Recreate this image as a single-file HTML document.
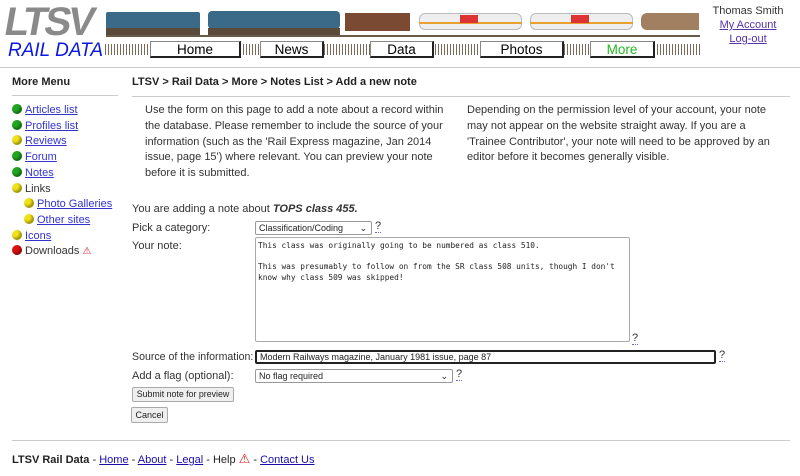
<!DOCTYPE html>
<html><head><meta charset="utf-8"><style>
*{margin:0;padding:0;box-sizing:border-box}
body{width:800px;height:476px;background:#fff;font-family:"Liberation Sans",Arial,sans-serif;font-size:11px;color:#333;position:relative;overflow:hidden}
.a{position:absolute;white-space:nowrap}
a{color:#1a0dab;text-decoration:underline}
.side a{color:#3333cc}
.dot{display:inline-block;width:10px;height:10px;border-radius:50%;margin-right:3px;vertical-align:-1px;box-shadow:inset -2px -2px 2px rgba(0,0,0,.35)}
.g{background:#1fa81f}.y{background:#f1e21a}.r{background:#e01010}
.btn{position:absolute;top:41px;height:17px;background:#fff;border:1px solid #888;border-right:2px solid #222;border-bottom:2px solid #222;font-size:13.5px;text-align:center;line-height:15px;color:#000}
.ties{position:absolute;top:44px;height:11px;background:repeating-linear-gradient(90deg,#7a6a5a 0 1px,#fff 1px 3px)}
.q{border-bottom:1px dotted #66c}
.sel{position:absolute;height:14px;border:1px solid #999;border-radius:2px;font-size:9px;padding-left:3px;line-height:12px;color:#222;background:#fff}
.car{position:absolute}
</style></head><body>
<div class="a" style="left:5px;top:1px;font-size:40px;font-weight:bold;color:#8a8a8a;letter-spacing:-3px;transform:skewX(-10deg);line-height:42px">LTSV</div>
<div class="a" style="left:8px;top:41px;font-size:19px;font-style:italic;color:#0a18e0;line-height:20px">RAIL DATA</div>
<div class="car" style="left:106px;top:12px;width:94px;height:17px;background:#3a6a88;border-radius:2px"></div>
<div class="car" style="left:106px;top:28px;width:94px;height:7px;background:#5a4a3a"></div>
<div class="car" style="left:208px;top:11px;width:132px;height:18px;background:#3a6a88;border-radius:4px"></div>
<div class="car" style="left:208px;top:28px;width:132px;height:7px;background:#5a4a3a"></div>
<div class="car" style="left:345px;top:13px;width:65px;height:18px;background:#7a4a32"></div>
<div class="car" style="left:419px;top:13px;width:103px;height:17px;background:#eee;border:1px solid #bbb;border-radius:6px"></div>
<div class="car" style="left:419px;top:22px;width:103px;height:2px;background:#e8a030"></div>
<div class="car" style="left:460px;top:15px;width:18px;height:8px;background:#d33"></div>
<div class="car" style="left:530px;top:13px;width:103px;height:17px;background:#eee;border:1px solid #bbb;border-radius:6px"></div>
<div class="car" style="left:530px;top:22px;width:103px;height:2px;background:#e8a030"></div>
<div class="car" style="left:571px;top:15px;width:18px;height:8px;background:#d33"></div>
<div class="car" style="left:641px;top:13px;width:58px;height:17px;background:#a08060;border-radius:6px 0 0 6px"></div>
<div class="car" style="left:106px;top:35px;width:594px;height:2px;background:#6a5a4a"></div>
<div class="ties" style="left:105px;width:595px"></div>
<div class="btn" style="left:150px;width:91px">Home</div>
<div class="btn" style="left:260px;width:64px">News</div>
<div class="btn" style="left:370px;width:64px">Data</div>
<div class="btn" style="left:480px;width:84px">Photos</div>
<div class="btn" style="left:590px;width:65px;color:#22bb22">More</div>
<div class="a" style="left:0;top:67px;width:800px;height:1px;background:#ccc"></div>
<div class="a" style="left:700px;width:96px;text-align:center;top:4px;line-height:14px">Thomas Smith<br><a style="color:#5533aa">My Account</a><br><a style="color:#5533aa">Log-out</a></div>
<div class="a" style="left:12px;top:76px;font-weight:bold;color:#222">More Menu</div>
<div class="a" style="left:12px;top:95px;width:106px;height:1px;background:#ccc"></div>
<div class="a side" style="left:12px;top:103px;line-height:15.7px">
<div><span class="dot g"></span><a>Articles list</a></div>
<div><span class="dot g"></span><a>Profiles list</a></div>
<div><span class="dot y"></span><a>Reviews</a></div>
<div><span class="dot g"></span><a>Forum</a></div>
<div><span class="dot g"></span><a>Notes</a></div>
<div><span class="dot y"></span>Links</div>
<div style="padding-left:12px"><span class="dot y"></span><a>Photo Galleries</a></div>
<div style="padding-left:12px"><span class="dot y"></span><a>Other sites</a></div>
<div><span class="dot y"></span><a>Icons</a></div>
<div><span class="dot r"></span>Downloads <span style="color:#d22;font-size:10px">⚠</span></div>
</div>
<div class="a" style="left:132px;top:76px;font-weight:bold;color:#222">LTSV &gt; Rail Data &gt; More &gt; Notes List &gt; Add a new note</div>
<div class="a" style="left:132px;top:96px;width:658px;height:1px;background:#ccc"></div>
<div class="a" style="left:145px;top:103px;line-height:15.8px">Use the form on this page to add a note about a record within<br>the database. Please remember to include the source of your<br>information (such as the 'Rail Express magazine, Jan 2014<br>issue, page 15') where relevant. You can preview your note<br>before it is submitted.</div>
<div class="a" style="left:467px;top:103px;line-height:15.8px">Depending on the permission level of your account, your note<br>may not appear on the website straight away. If you are a<br>'Trainee Contributor', your note will need to be approved by an<br>editor before it becomes generally visible.</div>
<div class="a" style="left:132px;top:203px">You are adding a note about <b><i>TOPS class 455.</i></b></div>
<div class="a" style="left:132px;top:222px">Pick a category:</div>
<div class="sel" style="left:255px;top:221px;width:117px">Classification/Coding<span style="position:absolute;right:4px">⌄</span></div>
<div class="a q" style="left:375px;top:220px">?</div>
<div class="a" style="left:132px;top:240px">Your note:</div>
<div class="a" style="left:255px;top:237px;width:375px;height:105px;border:1px solid #aaa;border-radius:2px;font-family:'DejaVu Sans Mono','Liberation Mono',monospace;font-size:7.8px;line-height:10.5px;padding:3px 2px;color:#222;white-space:pre">This class was originally going to be numbered as class 510.

This was presumably to follow on from the SR class 508 units, though I don't
know why class 509 was skipped!</div>
<div class="a q" style="left:632px;top:332px">?</div>
<div class="a" style="left:132px;top:351px;font-size:10.6px">Source of the information:</div>
<div class="sel" style="left:255px;top:350px;width:461px;border:2px solid #222;line-height:10px">Modern Railways magazine, January 1981 issue, page 87</div>
<div class="a q" style="left:719px;top:349px">?</div>
<div class="a" style="left:132px;top:370px">Add a flag (optional):</div>
<div class="sel" style="left:255px;top:369px;width:198px">No flag required<span style="position:absolute;right:4px">⌄</span></div>
<div class="a q" style="left:456px;top:368px">?</div>
<div class="a" style="left:132px;top:387px;width:102px;height:15px;border:1px solid #aaa;background:#efefef;border-radius:2px;font-size:8.8px;text-align:center;line-height:13px;color:#222">Submit note for preview</div>
<div class="a" style="left:131px;top:407px;width:37px;height:16px;border:1px solid #aaa;background:#efefef;border-radius:2px;font-size:9px;text-align:center;line-height:14px;color:#222">Cancel</div>
<div class="a" style="left:12px;top:440px;width:778px;height:1px;background:#ccc"></div>
<div class="a" style="left:12px;top:451px;color:#222"><b>LTSV Rail Data</b> - <a>Home</a> - <a>About</a> - <a>Legal</a> - Help <span style="color:#d22;font-size:13px">⚠</span> - <a>Contact Us</a></div>
</body></html>
